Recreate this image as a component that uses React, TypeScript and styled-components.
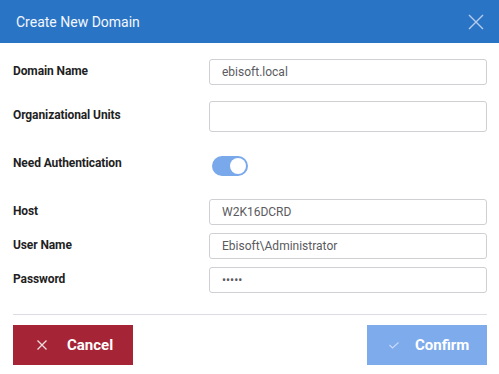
import React from "react";
import styled, { createGlobalStyle } from "styled-components";

const Global = createGlobalStyle`
  html, body { margin: 0; padding: 0; background: #ffffff; }
  body { font-family: Roboto, "Liberation Sans", Arial, sans-serif; }
  * { box-sizing: border-box; }
`;

const Dialog = styled.div`
  width: 499px;
  height: 374px;
  background: #ffffff;
  display: flex;
  flex-direction: column;
`;

const Header = styled.div`
  height: 43px;
  background: #2a74c6;
  display: flex;
  align-items: center;
  justify-content: space-between;
  padding: 0 15px 0 16px;
`;

const Title = styled.h1`
  margin: 0;
  font-size: 14px;
  font-weight: 400;
  color: #f4f7fc;
`;

const CloseButton = styled.button`
  width: 16px;
  height: 16px;
  padding: 0;
  border: none;
  background: transparent;
  display: flex;
  cursor: pointer;
`;

const Form = styled.div`
  display: flex;
  flex-direction: column;
  padding: 16px 12px 0 13px;
`;

const Row = styled.div<{ $gap: number }>`
  display: grid;
  grid-template-columns: 196px 1fr;
  align-items: center;
  margin-bottom: ${(p) => p.$gap}px;
`;

const Label = styled.label<{ $lift: number }>`
  font-size: 12px;
  font-weight: 700;
  color: #1f1f24;
  letter-spacing: -0.1px;
  margin-bottom: ${(p) => p.$lift}px;
`;

const Input = styled.input<{ $h: number }>`
  height: ${(p) => p.$h}px;
  width: 100%;
  border: 1px solid #cfcfd4;
  border-radius: 3px;
  padding: 0 12px;
  font-family: Roboto, "Liberation Sans", Arial, sans-serif;
  font-size: 12px;
  color: #5a5a60;
  background: #fff;
  outline: none;
  caret-color: #111;
  &:focus { border-color: #cfcfd4; }
`;

const ToggleTrack = styled.div<{ $on: boolean }>`
  width: 36px;
  height: 20px;
  margin-left: 3px;
  border-radius: 10px;
  background: ${(p) => (p.$on ? "#79a8eb" : "#c9c9cf")};
  display: flex;
  align-items: center;
  justify-content: ${(p) => (p.$on ? "flex-end" : "flex-start")};
  padding: 0 2px;
`;

const Knob = styled.div`
  width: 16px;
  height: 16px;
  border-radius: 50%;
  background: #ffffff;
`;

const Divider = styled.hr`
  margin: 0 12px 10px 13px;
  border: none;
  border-top: 1px solid #dcdce4;
`;

const Footer = styled.div`
  display: flex;
  justify-content: space-between;
  padding: 0 12px 0 13px;
`;

const ActionButton = styled.button<{ $variant: "cancel" | "confirm" }>`
  width: 120px;
  height: 40px;
  border: none;
  border-radius: 0;
  background: ${(p) => (p.$variant === "cancel" ? "#a52536" : "#7eabec")};
  color: #ffffff;
  font-family: Roboto, "Liberation Sans", Arial, sans-serif;
  font-size: 15px;
  font-weight: 700;
  display: flex;
  align-items: center;
  padding: 0 0 0 ${(p) => (p.$variant === "cancel" ? 24 : 22)}px;
  gap: ${(p) => (p.$variant === "cancel" ? 20 : 16)}px;
  cursor: pointer;
`;

const fields = [
  { label: "Domain Name", value: "ebisoft.local", h: 26, gap: 16, lift: 3 },
  { label: "Organizational Units", value: "", h: 31, gap: 24, lift: 4 },
];

const hostFields = [
  { label: "Host", value: "W2K16DCRD", h: 26, gap: 8, lift: 2, type: "text" },
  { label: "User Name", value: "Ebisoft\\Administrator", h: 26, gap: 8, lift: 2, type: "text" },
  { label: "Password", value: "12345", h: 26, gap: 21, lift: 3, type: "password" },
];

export default function App() {
  return (
    <>
      <Global />
      <Dialog>
        <Header>
          <Title>Create New Domain</Title>
          <CloseButton aria-label="Close">
            <svg width="16" height="16" viewBox="0 0 16 16">
              <path d="M1 1 L15 15 M15 1 L1 15" stroke="#b7cdef" strokeWidth="1.4" fill="none" />
            </svg>
          </CloseButton>
        </Header>
        <Form>
          {fields.map((f) => (
            <Row key={f.label} $gap={f.gap}>
              <Label $lift={f.lift}>{f.label}</Label>
              <Input $h={f.h} readOnly value={f.value} />
            </Row>
          ))}
          <Row $gap={23}>
            <Label $lift={6}>Need Authentication</Label>
            <ToggleTrack $on>
              <Knob />
            </ToggleTrack>
          </Row>
          {hostFields.map((f) => (
            <Row key={f.label} $gap={f.gap}>
              <Label $lift={f.lift}>{f.label}</Label>
              <Input
                $h={f.h}
                type={f.type}
                defaultValue={f.value}
                autoFocus={f.type === "password"}
              />
            </Row>
          ))}
        </Form>
        <Divider />
        <Footer>
          <ActionButton $variant="cancel">
            <svg width="10" height="10" viewBox="0 0 10 10">
              <path d="M0.5 0.5 L9.5 9.5 M9.5 0.5 L0.5 9.5" stroke="#f2dde0" strokeWidth="1.3" fill="none" />
            </svg>
            Cancel
          </ActionButton>
          <ActionButton $variant="confirm">
            <svg width="10" height="7" viewBox="0 0 10 7">
              <path d="M0.5 3 L3.5 6 L9.5 0.5" stroke="#c9daf5" strokeWidth="1.1" fill="none" />
            </svg>
            Confirm
          </ActionButton>
        </Footer>
      </Dialog>
    </>
  );
}
